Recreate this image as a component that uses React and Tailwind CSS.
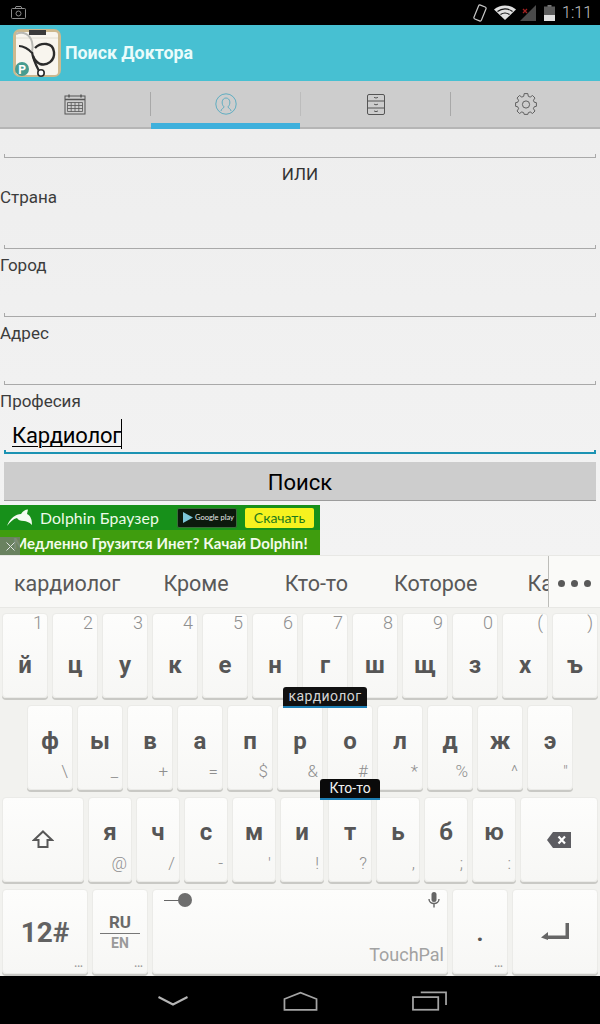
import React from "react";

const row1 = [["й", "1"], ["ц", "2"], ["у", "3"], ["к", "4"], ["е", "5"], ["н", "6"], ["г", "7"], ["ш", "8"], ["щ", "9"], ["з", "0"], ["х", "("], ["ъ", ")"]];
const row2 = [["ф", "\\"], ["ы", "_"], ["в", "+"], ["а", "="], ["п", "$"], ["р", "&"], ["о", "#"], ["л", "*"], ["д", "%"], ["ж", "^"], ["э", "\""]];
const row3 = [["я", "@"], ["ч", "/"], ["с", "-"], ["м", "'"], ["и", "!"], ["т", "?"], ["ь", ","], ["б", ";"], ["ю", ":"]];

const keyBox = "relative flex items-center justify-center rounded-[4px] border border-[#ebebe8] bg-gradient-to-b from-[#fdfdfc] to-[#f7f7f5] shadow-[0_2px_0_#c9c9c5] text-[#565656]";

function Key({ className = "", children }) {
  return <div className={keyBox + " " + className}>{children}</div>;
}

function Dots() {
  return <span className="absolute right-[4px] bottom-[4px] text-[10px] font-bold leading-[10px] text-[#9a9a9a]">...</span>;
}

/** Holo edit-text underline with small end ticks */
function Field({ h, focused, children }) {
  const line = focused ? "bg-[#1c93b3]" : "bg-[#a9a9a9]";
  return (
    <div className={"relative mx-[4px] " + h}>
      {children}
      <div className={"absolute left-0 right-0 bottom-0 " + (focused ? "h-[2px] " : "h-px ") + line} />
      <div className={"absolute left-0 bottom-0 h-[4px] " + (focused ? "w-[2px] " : "w-px ") + line} />
      <div className={"absolute right-0 bottom-0 h-[4px] " + (focused ? "w-[2px] " : "w-px ") + line} />
    </div>
  );
}

function Label({ children }) {
  return <div className="h-[20px] text-[17px] leading-[20px] text-[#3c3c3c]">{children}</div>;
}

function Logo() {
  return (
    <svg width="48" height="48" viewBox="0 0 48 48">
      <rect x="0" y="0" width="48" height="48" rx="7" fill="#cdb98f" />
      <rect x="3" y="3" width="42" height="43" rx="3" fill="#f8f5ee" />
      <path d="M3 9H45" stroke="#e2ded2" strokeWidth="1" />
      <rect x="16" y="1" width="17" height="5" fill="#3a3a3a" />
      <path d="M3 5 C10 2 17 5 19 13 C20 17 20 20 19 23" fill="none" stroke="#b9b9b4" strokeWidth="2" />
      <path d="M6 17 C10 17 16 20 19 24" fill="none" stroke="#2b2b2b" strokeWidth="2" />
      <path d="M19 23 C20 31 24 38 27 44" fill="none" stroke="#2b2b2b" strokeWidth="2.2" />
      <path d="M22 19 C28 13 40 13 41 23 C42 32 34 37 27 35 C23 33 21 30 20 27" fill="none" stroke="#2b2b2b" strokeWidth="2.4" />
      <circle cx="28" cy="44" r="3.2" fill="#fff" stroke="#2b2b2b" strokeWidth="1.6" />
      <circle cx="9" cy="40" r="7" fill="#479c90" />
      <text x="9" y="44.5" textAnchor="middle" fontSize="12" fontWeight="700" fill="#fff" fontFamily="Roboto, sans-serif">P</text>
    </svg>
  );
}

function CalendarIcon() {
  return (
    <svg width="22" height="22" viewBox="0 0 22 22" fill="none" stroke="#555" strokeWidth="1">
      <rect x="1" y="3" width="20" height="18" />
      <path d="M1 6.5H21" strokeWidth="1.5" />
      <path d="M5 1.5V4.5M17 1.5V4.5" strokeWidth="1.5" />
      <path d="M3.5 9.5H18.5V18.5H3.5ZM3.5 12.5H18.5M3.5 15.5H18.5M7.2 9.5V18.5M11 9.5V18.5M14.8 9.5V18.5" strokeWidth="0.8" />
    </svg>
  );
}

function PersonIcon() {
  return (
    <svg width="22" height="22" viewBox="0 0 22 22" fill="none" stroke="#54a9bf" strokeWidth="0.9">
      <circle cx="11" cy="11" r="10.2" />
      <path d="M6 18 C6 15.5 9 15.5 9 13.8 C7.5 12.5 7 10.5 7.2 8.8 C7.5 6.4 9 5 11 5 C13 5 14.5 6.4 14.8 8.8 C15 10.5 14.5 12.5 13 13.8 C13 15.5 16 15.5 16 18" />
    </svg>
  );
}

function DrawersIcon() {
  return (
    <svg width="18" height="21" viewBox="0 0 18 21" fill="none" stroke="#555" strokeWidth="1">
      <rect x="0.5" y="0.5" width="17" height="20" rx="1.5" />
      <path d="M0.5 7H17.5M0.5 14H17.5" />
      <path d="M7 3.2C8 4.2 10 4.2 11 3.2M7 10C8 11 10 11 11 10M7 16.8C8 17.8 10 17.8 11 16.8" />
    </svg>
  );
}

function GearIcon() {
  return (
    <svg width="22" height="22" viewBox="0 0 22 22" fill="none" stroke="#555" strokeWidth="0.9" strokeLinejoin="round">
      <path d="M9.2 0.6H12.8L13.3 3.3L15.2 4.1L17.5 2.5L20 5L18.4 7.3L19.2 9.2L21.4 9.7V13.3L19.2 13.8L18.4 15.7L20 18L17.5 20.5L15.2 18.9L13.3 19.7L12.8 21.4H9.2L8.7 19.7L6.8 18.9L4.5 20.5L2 18L3.6 15.7L2.8 13.8L0.6 13.3V9.7L2.8 9.2L3.6 7.3L2 5L4.5 2.5L6.8 4.1L8.7 3.3Z" />
      <circle cx="11" cy="11.5" r="3.6" />
    </svg>
  );
}

function Tab({ active, className = "", children }) {
  return (
    <div className={"relative flex h-full items-center justify-center " + className}>
      {children}
      {active && <div className="absolute left-0 right-0 -bottom-[2px] h-[6px] bg-[#3eb0dc]" />}
    </div>
  );
}

function StatusIcons() {
  return (
    <div className="flex items-center">
      <svg width="14" height="18" viewBox="0 0 14 18" className="mr-[7px]" fill="none" stroke="#c8c8c8" strokeWidth="1.2">
        <rect x="3" y="1.5" width="8" height="15" rx="1.5" transform="rotate(22 7 9)" />
      </svg>
      <svg width="22" height="15" viewBox="0 0 22 15" className="mr-[4px]">
        <path d="M0 4.5C6 -1 16 -1 22 4.5L11 15Z" fill="#e0e0e0" />
        <path d="M3.5 6.5C8 3 14 3 18.5 6.5" stroke="#111" strokeWidth="1.2" fill="none" />
        <path d="M6.5 9.5C9.5 7.5 12.5 7.5 15.5 9.5" stroke="#111" strokeWidth="1.2" fill="none" />
      </svg>
      <svg width="16" height="16" viewBox="0 0 16 16" className="mr-[8px]">
        <path d="M0 16L16 0V16Z" fill="#4a4a4a" />
        <path d="M3 4L7 8M7 4L3 8" stroke="#a32020" strokeWidth="1.3" />
      </svg>
      <svg width="11" height="16" viewBox="0 0 11 16" className="mr-[7px]">
        <rect x="3.5" y="0" width="4" height="2" fill="#777" />
        <rect x="0" y="1.5" width="11" height="14.5" fill="#5c5c5c" />
        <rect x="0" y="10" width="11" height="6" fill="#e0e0e0" />
      </svg>
      <span className="mr-[8px] text-[16px] font-light leading-[25px] text-[#c4c4c4]">1:11</span>
    </div>
  );
}

function AdBanner() {
  return (
    <div className="relative h-[50px] w-[320px] overflow-hidden [font-family:Lato,sans-serif]">
      <div className="flex h-[25px] items-center bg-[#17901a] pl-[6px]">
        <svg width="27" height="18" viewBox="0 0 27 18">
          <path d="M1 17C4 9 10 5 15 5C17 2 19 0.5 22 0.5L21 5C25 7 26 11 26 16C23 13 20 12 18 12C14 12 12 11 11 9C7 10 4 13 1 17Z" fill="#f4fbf1" />
        </svg>
        <span className="ml-[7px] w-[137px] whitespace-nowrap text-[15.8px] leading-[20px] tracking-[0.1px] text-[#eefbe9]">Dolphin Браузер</span>
        <div className="flex h-[20px] w-[60px] items-center rounded-[2px] border border-[#3b6b3b] bg-[#0c1a0d] pl-[5px]">
          <svg width="10" height="11" viewBox="0 0 10 11"><path d="M0 0L10 5.5L0 11Z" fill="#7cc6d8" /></svg>
          <span className="ml-[2px] whitespace-nowrap text-[7.5px] leading-[10px] text-[#e8e8e8]">Google play</span>
        </div>
        <div className="ml-[8px] flex h-[20px] w-[69px] items-center justify-center rounded-[2px] bg-[#f5f21f] text-[14px] text-[#1c7a1c]">Скачать</div>
      </div>
      <div className="flex h-[25px] items-center whitespace-nowrap bg-[#3f9d0e] pl-[13px] text-[15px] font-bold leading-[20px] tracking-[0.1px] text-[#f3fbec]">
        Медленно Грузится Инет? Качай Dolphin!
      </div>
      <div className="absolute left-0 bottom-0 flex h-[18px] w-[20px] items-center justify-center bg-[#6f7f68]/90">
        <svg width="9" height="9" viewBox="0 0 9 9"><path d="M0.5 0.5L8.5 8.5M8.5 0.5L0.5 8.5" stroke="#e2e2e2" strokeWidth="1" /></svg>
      </div>
    </div>
  );
}

function Keyboard() {
  return (
    <div className="relative h-[421px] bg-[#f2f2ef]">
      {/* suggestion strip */}
      <div className="flex h-[53px] border-t border-b border-[#e8e8e5] bg-[#f8f8f6] text-[21.5px] leading-[56px] text-[#595959]">
        <div className="flex w-[549px] overflow-hidden whitespace-nowrap border-r border-[#bdbdb9] pl-[14px]">
          <span>кардиолог</span>
          <span className="ml-[43px]">Кроме</span>
          <span className="ml-[56px]">Кто-то</span>
          <span className="ml-[46px]">Которое</span>
          <span className="ml-[50px]">Ка</span>
        </div>
        <div className="flex flex-1 items-center justify-center gap-[6px] bg-[#fafaf8] pt-[3px]">
          <div className="h-[7px] w-[7px] rounded-full bg-[#595959]" />
          <div className="h-[7px] w-[7px] rounded-full bg-[#595959]" />
          <div className="h-[7px] w-[7px] rounded-full bg-[#595959]" />
        </div>
      </div>

      <div className="flex flex-col gap-[7px] pt-[5px] text-[24px] font-bold">
        <div className="flex gap-[4px] pl-[2px]">
          {row1.map(([l, h]) => (
            <Key key={l} className="h-[85px] w-[46px] pt-[18px]">
              {l}
              <span className="absolute right-[4px] -top-[1px] text-[18px] font-light leading-[20px] text-[#8f8f8f]">{h}</span>
            </Key>
          ))}
        </div>
        <div className="flex gap-[4px] pl-[27px]">
          {row2.map(([l, h]) => (
            <Key key={l} className="h-[85px] w-[46px] pb-[14px]">
              {l}
              <span className="absolute right-[4px] top-[55px] text-[17px] font-light leading-[20px] text-[#8f8f8f]">{h}</span>
            </Key>
          ))}
        </div>
        <div className="flex gap-[4px] pl-[2px]">
          <Key className="h-[85px] w-[82px]">
            <svg width="22" height="19" viewBox="0 0 22 19" fill="none" stroke="#585858" strokeWidth="2">
              <path d="M11 1.5L20 10H15.5V17H6.5V10H2Z" strokeLinejoin="miter" />
            </svg>
          </Key>
          {row3.map(([l, h]) => (
            <Key key={l} className="h-[85px] w-[44px] pb-[16px]">
              {l}
              <span className="absolute right-[4px] top-[55px] text-[17px] font-light leading-[20px] text-[#8f8f8f]">{h}</span>
            </Key>
          ))}
          <Key className="h-[85px] w-[78px]">
            <svg width="24" height="16" viewBox="0 0 24 16">
              <path d="M6 0H24V16H6L0 8Z" fill="#5d5d62" />
              <path d="M11.5 4.5L18 11.5M18 4.5L11.5 11.5" stroke="#fff" strokeWidth="2.2" />
            </svg>
          </Key>
        </div>
        <div className="flex gap-[4px] pl-[2px]">
          <Key className="h-[85px] w-[86px] pt-[2px] text-[28px] text-[#626262]">
            12#
            <Dots />
          </Key>
          <Key className="h-[85px] w-[56px] flex-col pt-[2px]">
            <span className="text-[17px] leading-[17px] text-[#6a6a6a]">RU</span>
            <div className="my-[2px] h-px w-[40px] bg-[#777]" />
            <span className="text-[14px] leading-[15px] text-[#9a9a9a]">EN</span>
            <Dots />
          </Key>
          <Key className="h-[85px] w-[296px]">
            <div className="absolute left-[11px] top-[3px] flex items-center">
              <div className="h-[1px] w-[15px] bg-[#666]" />
              <div className="-ml-[1px] h-[14px] w-[14px] rounded-full bg-[#6e6e6e]" />
            </div>
            <svg className="absolute right-[7px] top-[2px]" width="12" height="16" viewBox="0 0 12 16" fill="none">
              <rect x="3.5" y="0" width="5" height="10" rx="2.5" fill="#666" />
              <path d="M1 7C1 13 11 13 11 7M6 12V15.5" stroke="#666" strokeWidth="1.4" />
            </svg>
            <span className="absolute right-[3px] top-[54px] text-[18px] font-normal leading-[22px] text-[#a2a2a2]">TouchPal</span>
          </Key>
          <Key className="h-[85px] w-[56px] pt-[3px]">
            .
            <Dots />
          </Key>
          <Key className="h-[85px] w-[86px]">
            <svg width="28" height="17" viewBox="0 0 28 17">
              <path d="M24.5 0H28V16H7V17L0 14.5L7 9V12.5H24.5Z" fill="#666" />
            </svg>
          </Key>
        </div>
      </div>

      {/* swipe hints laid over the keys */}
      <div className="absolute left-[283px] top-[132px] flex h-[21px] w-[84px] items-center justify-center rounded-t-[3px] border-b-2 border-[#1d7fb5] bg-[#111] text-[14px] tracking-[0.4px] text-[#d5d5d5]">кардиолог</div>
      <div className="absolute left-[320px] top-[224px] flex h-[21px] w-[60px] items-center justify-center rounded-t-[3px] border-b-2 border-[#1d7fb5] bg-[#0a0a0a] text-[14px] text-[#f2f2f2]">Кто-то</div>
    </div>
  );
}

export default function App() {
  return (
    <div className="flex h-[1024px] w-[600px] flex-col overflow-hidden bg-[#f1f1f1] [font-family:Roboto,sans-serif]">
      {/* status bar */}
      <div className="flex h-[25px] items-center justify-between bg-black pl-[11px]">
        <svg width="15" height="13" viewBox="0 0 15 13" fill="none" stroke="#8c8c8c" strokeWidth="1">
          <rect x="0.5" y="2.5" width="14" height="10" rx="1" />
          <path d="M4 2.5L5 0.5H10L11 2.5" />
          <circle cx="7.5" cy="7.5" r="2.5" />
        </svg>
        <StatusIcons />
      </div>

      {/* app bar */}
      <div className="flex h-[56px] items-center bg-[#47c0d2] pl-[13px]">
        <Logo />
        <span className="ml-[4px] pt-[1px] text-[17.8px] font-bold text-[#eafcfb]">Поиск Доктора</span>
      </div>

      {/* tabs */}
      <div className="flex h-[48px] items-center border-b-2 border-[#b5b5b5] bg-[#cdcdcd]">
        <Tab className="w-[150px]"><CalendarIcon /></Tab>
        <div className="h-[24px] w-px shrink-0 bg-[#a8a8a8]" />
        <Tab active className="w-[149px]"><PersonIcon /></Tab>
        <div className="h-[24px] w-px shrink-0 bg-[#bcbcbc]" />
        <Tab className="w-[149px]"><DrawersIcon /></Tab>
        <div className="h-[24px] w-px shrink-0 bg-[#a8a8a8]" />
        <Tab className="w-[149px]"><GearIcon /></Tab>
      </div>

      {/* form */}
      <div className="flex h-[426px] flex-col bg-gradient-to-b from-[#eeeeee] to-[#f3f3f3]">
        <Field h="h-[29px]" />
        <div className="h-[29px] text-center text-[17px] leading-[32px] text-[#333]">ИЛИ</div>
        <Label>Страна</Label>
        <Field h="h-[42px]" />
        <div className="mt-[6px]"><Label>Город</Label></div>
        <Field h="h-[42px]" />
        <div className="mt-[6px]"><Label>Адрес</Label></div>
        <Field h="h-[42px]" />
        <div className="mt-[6px]"><Label>Професия</Label></div>
        <Field h="h-[43px]" focused>
          <div className="flex pl-[8px] pt-[9px] text-[22px] leading-[32px] tracking-[-0.2px] text-black">
            <span className="underline decoration-1 underline-offset-[3px]">Кардиолог</span>
            <div className="-mt-[1px] h-[30px] w-px bg-black" />
          </div>
        </Field>
        <button className="mx-[4px] mt-[8px] h-[39px] border-b border-[#9c9c9c] bg-[#cdcdcd] pt-[4px] text-[22px] leading-[34px] text-black">Поиск</button>
        <div className="mt-[4px]"><AdBanner /></div>
      </div>

      <Keyboard />

      {/* nav bar */}
      <div className="flex h-[48px] items-center bg-black pt-[2px]">
        <svg className="ml-[158px]" width="30" height="10" viewBox="0 0 30 10" fill="none" stroke="#b4b4b4" strokeWidth="2">
          <path d="M0.5 1L15 8.5L29.5 1" />
        </svg>
        <svg className="ml-[95px]" width="35" height="20" viewBox="0 0 36 20" fill="none" stroke="#a4a4a4" strokeWidth="1.8">
          <path d="M1.5 19V8L18 1.5L34.5 8V19Z" />
        </svg>
        <svg className="ml-[94px]" width="35" height="20" viewBox="0 0 36 20" fill="none" stroke="#a4a4a4" strokeWidth="1.8">
          <rect x="1" y="6" width="26" height="13" />
          <path d="M9 1H35V14" />
        </svg>
      </div>
    </div>
  );
}
